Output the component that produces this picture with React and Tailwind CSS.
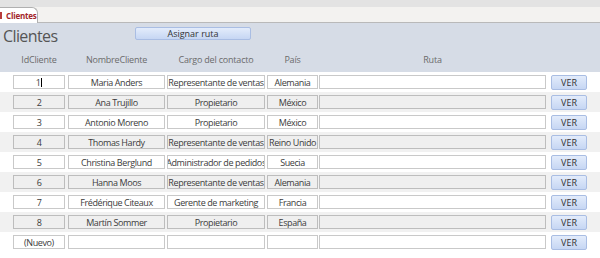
import React from 'react';

const rows = [
  { id: '1', name: 'Maria Anders', cargo: 'Representante de ventas', pais: 'Alemania' },
  { id: '2', name: 'Ana Trujillo', cargo: 'Propietario', pais: 'México' },
  { id: '3', name: 'Antonio Moreno', cargo: 'Propietario', pais: 'México' },
  { id: '4', name: 'Thomas Hardy', cargo: 'Representante de ventas', pais: 'Reino Unido' },
  { id: '5', name: 'Christina Berglund', cargo: 'Administrador de pedidos', pais: 'Suecia' },
  { id: '6', name: 'Hanna Moos', cargo: 'Representante de ventas', pais: 'Alemania' },
  { id: '7', name: 'Frédérique Citeaux', cargo: 'Gerente de marketing', pais: 'Francia' },
  { id: '8', name: 'Martín Sommer', cargo: 'Propietario', pais: 'España' },
  { id: '(Nuevo)', name: '', cargo: '', pais: '' },
];

const font = { fontFamily: '"Open Sans", "Liberation Sans", sans-serif' };

function Cell({ w, ml, grey, children }) {
  return (
    <div
      className={`${w} ${ml} h-[14px] border flex items-center justify-center overflow-hidden whitespace-nowrap text-[9px] leading-none text-[#3b3b3b] tracking-[-0.4px] ${
        grey ? 'bg-[#efefef] border-[#bdbdbd]' : 'bg-white border-[#c9c9c9]'
      }`}
    >
      {children}
    </div>
  );
}

export default function App() {
  return (
    <div className="w-[600px] h-[258px] bg-white overflow-hidden" style={font}>
      {/* tab strip */}
      <div className="h-[7px] bg-[#e3e3e3]" />
      <div className="h-[16px] bg-[#f3f2f0] border-b border-[#b9b9b9] flex items-end">
        <div className="h-[16px] w-[38px] bg-white border-t border-r border-[#b0b0b0] rounded-tr-[6px] flex items-center -mb-px">
          <div className="w-[2px] h-[7px] bg-[#b83c3c]" />
          <span className="ml-[4px] text-[8px] font-bold text-[#a3262a] tracking-[-0.2px]">Clientes</span>
        </div>
      </div>

      {/* header */}
      <div className="h-[50px] bg-[#d6dce6]">
        <div className="flex items-start h-[26px]">
          <div className="ml-[3px] w-[132px] mt-[3px] text-[16px] leading-[20px] text-[#555] tracking-[-0.6px]">Clientes</div>
          <button className="mt-[4px] w-[116px] h-[13px] rounded-[2px] border border-[#a9bde3] bg-gradient-to-b from-[#e3ecfb] to-[#c6d6f3] text-[9px] leading-none text-[#333]">
            Asignar ruta
          </button>
        </div>
        <div className="flex text-[9px] text-[#6b6b6b] leading-none mt-[6px] tracking-[-0.2px]">
          <div className="ml-[13px] w-[52px] text-center">IdCliente</div>
          <div className="ml-[3px] w-[97px] text-center">NombreCliente</div>
          <div className="ml-[2px] w-[98px] text-center">Cargo del contacto</div>
          <div className="ml-[2px] w-[51px] text-center">País</div>
          <div className="ml-[1px] w-[227px] text-center">Ruta</div>
        </div>
      </div>

      {/* rows */}
      <div className="mt-[-1px]">
        {rows.map((r, i) => {
          const grey = i % 2 === 1;
          return (
            <div key={i} className={`h-[20px] flex items-center ${grey ? 'bg-[#f1f1f1]' : 'bg-white'}`}>
              <Cell w="w-[52px]" ml="ml-[13px]" grey={grey}>
                {r.id}
                {i === 0 && <span className="w-px h-[9px] bg-black ml-px" />}
              </Cell>
              <Cell w="w-[97px]" ml="ml-[3px]" grey={grey}>{r.name}</Cell>
              <Cell w="w-[98px]" ml="ml-[2px]" grey={grey}>{r.cargo}</Cell>
              <Cell w="w-[51px]" ml="ml-[2px]" grey={grey}>{r.pais}</Cell>
              <Cell w="w-[227px]" ml="ml-[1px]" grey={grey} />
              <button className="ml-[5px] w-[36px] h-[15px] rounded-[2px] border border-[#a9bde3] bg-gradient-to-b from-[#e3ecfb] to-[#c6d6f3] text-[9px] leading-none text-[#333]">
                VER
              </button>
            </div>
          );
        })}
      </div>
    </div>
  );
}
